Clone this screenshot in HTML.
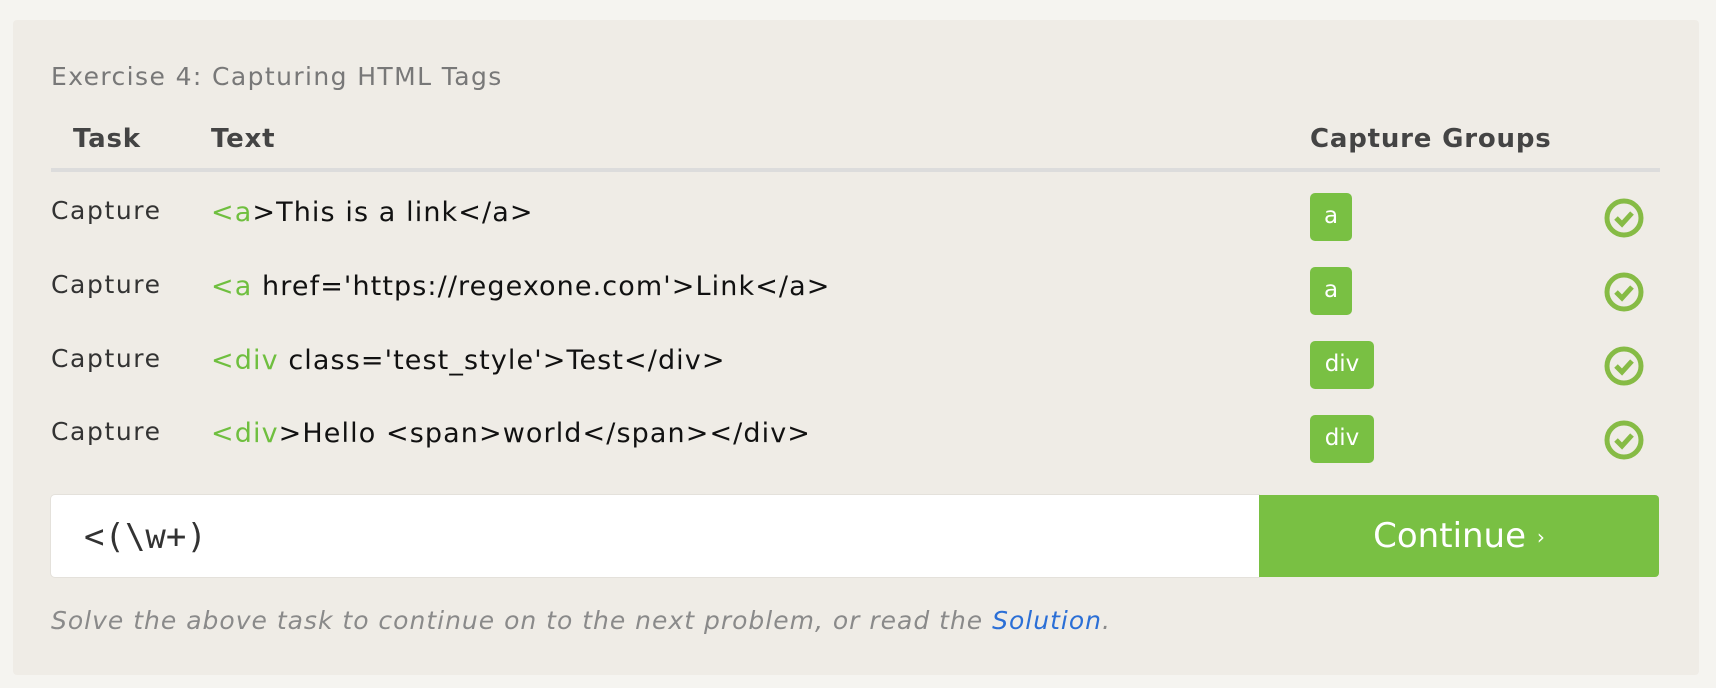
<!DOCTYPE html>
<html><head><meta charset="utf-8"><style>
body{margin:0;width:1716px;height:688px;background:#f5f4f0;font-family:"DejaVu Sans","Liberation Sans",sans-serif;position:relative;overflow:hidden}
.panel{position:absolute;left:13px;top:20px;width:1686px;height:655px;background:#efece6;border-radius:4px}
.a{position:absolute;white-space:nowrap;line-height:1}
h1{position:absolute;left:51px;top:64px;margin:0;font-weight:normal;font-size:25px;letter-spacing:1.4px;color:#787878;line-height:1}
.hd{font-weight:bold;font-size:26px;letter-spacing:0.8px;color:#444;top:126px}
.line{position:absolute;left:51px;top:168px;width:1609px;height:4px;background:#dcdcdc}
.cap{left:51px;font-size:25px;letter-spacing:1.6px;color:#333}
.txt{left:211px;font-size:27px;letter-spacing:1.1px;color:#111}
.g{color:#6fbf3f}
.badge{position:absolute;left:1310px;height:48px;background:#79c043;border-radius:5px;color:#fff;font-size:23px;line-height:46px;text-align:center}
.chk{position:absolute;left:1603px;width:42px;height:42px}
.inp{position:absolute;left:51px;top:495px;width:1208px;height:82px;background:#fff;border-radius:4px 0 0 4px;box-shadow:0 0 0 1px #e4e1db}
.inp span{position:absolute;left:33px;top:22px;font-family:"DejaVu Sans Mono",monospace;font-size:34px;color:#333}
.btn{position:absolute;left:1259px;top:495px;width:400px;height:82px;background:#79c043;border-radius:0 4px 4px 0;color:#fff;font-size:34px;text-align:center;line-height:82px}
.foot{left:51px;top:608px;font-size:25px;letter-spacing:1px;font-style:italic;color:#8a8a8a}
.foot b{font-weight:normal;color:#2b6fd6}
</style></head><body>
<div class="panel"></div>
<h1>Exercise 4: Capturing HTML Tags</h1>
<div class="a hd" style="left:73px">Task</div>
<div class="a hd" style="left:211px">Text</div>
<div class="a hd" style="left:1310px">Capture Groups</div>
<div class="line"></div>

<div class="a cap" style="top:198px">Capture</div>
<div class="a txt" style="top:199px"><span class="g">&lt;a</span>&gt;This is a link&lt;/a&gt;</div>
<div class="a cap" style="top:272px">Capture</div>
<div class="a txt" style="top:273px"><span class="g">&lt;a</span> href='https://regexone.com'&gt;Link&lt;/a&gt;</div>
<div class="a cap" style="top:346px">Capture</div>
<div class="a txt" style="top:347px"><span class="g">&lt;div</span> class='test_style'&gt;Test&lt;/div&gt;</div>
<div class="a cap" style="top:419px">Capture</div>
<div class="a txt" style="top:420px"><span class="g">&lt;div</span>&gt;Hello &lt;span&gt;world&lt;/span&gt;&lt;/div&gt;</div>

<div class="badge" style="top:193px;width:42px">a</div>
<div class="badge" style="top:267px;width:42px">a</div>
<div class="badge" style="top:341px;width:64px">div</div>
<div class="badge" style="top:415px;width:64px">div</div>

<svg class="chk" style="top:197px" viewBox="0 0 42 42"><circle cx="21" cy="21" r="17" fill="none" stroke="#86bb45" stroke-width="5"/><path d="M13 21l6 6 10-11" fill="none" stroke="#86bb45" stroke-width="5"/></svg>
<svg class="chk" style="top:271px" viewBox="0 0 42 42"><circle cx="21" cy="21" r="17" fill="none" stroke="#86bb45" stroke-width="5"/><path d="M13 21l6 6 10-11" fill="none" stroke="#86bb45" stroke-width="5"/></svg>
<svg class="chk" style="top:345px" viewBox="0 0 42 42"><circle cx="21" cy="21" r="17" fill="none" stroke="#86bb45" stroke-width="5"/><path d="M13 21l6 6 10-11" fill="none" stroke="#86bb45" stroke-width="5"/></svg>
<svg class="chk" style="top:419px" viewBox="0 0 42 42"><circle cx="21" cy="21" r="17" fill="none" stroke="#86bb45" stroke-width="5"/><path d="M13 21l6 6 10-11" fill="none" stroke="#86bb45" stroke-width="5"/></svg>

<div class="inp"><span>&lt;(\w+)</span></div>
<div class="btn">Continue <span style="font-size:20px;vertical-align:3px">›</span></div>
<div class="a foot">Solve the above task to continue on to the next problem, or read the <b>Solution</b>.</div>
</body></html>
